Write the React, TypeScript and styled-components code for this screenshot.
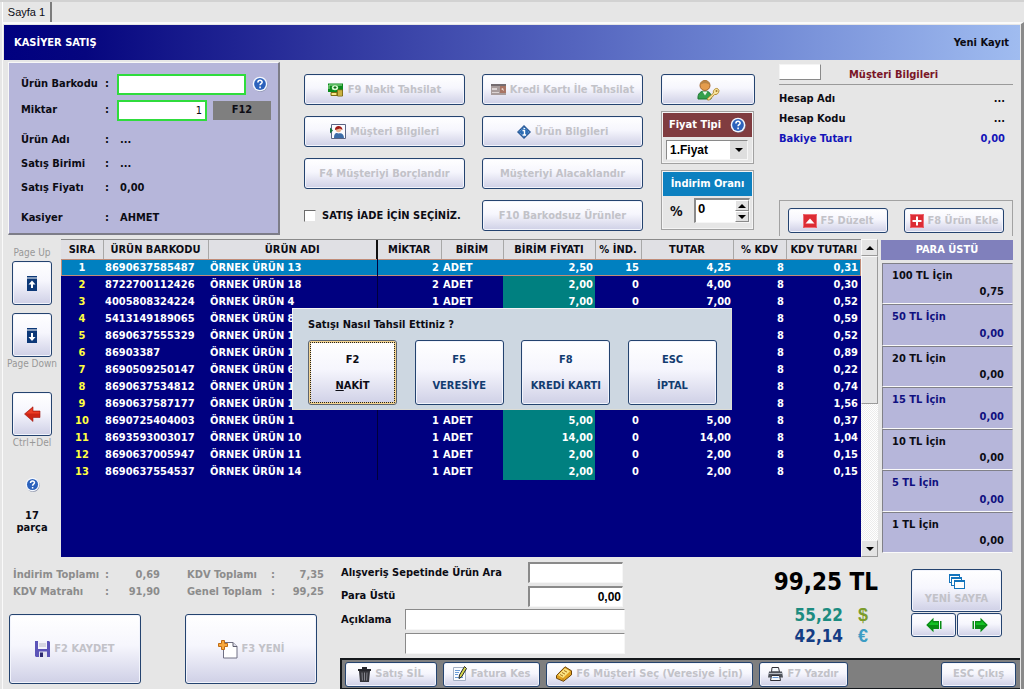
import React from "react";
import styled, { createGlobalStyle, css } from "styled-components";

const ui = `"DejaVu Sans Condensed", "DejaVu Sans", Tahoma, sans-serif`;
const plain = `"Liberation Sans", Arial, sans-serif`;

const GlobalStyle = createGlobalStyle`
  *, *::before, *::after { box-sizing: border-box; }
  body {
    margin: 0;
    background: #e6e6e6;
    color: #0c0c14;
    font: bold 11px/16px ${ui};
  }
  button, input, select { font: inherit; color: inherit; margin: 0; }
  svg { display: block; flex: none; }
`;

/* ---------- shell ---------- */

const Page = styled.div`
  position: relative;
  border-top: 2px solid #d2d2d2;
`;

const TabStrip = styled.nav`
  display: flex;
  height: 20px;
  padding-left: 2px;
`;

const Tab = styled.button`
  width: 50px;
  padding: 0;
  border: 0;
  border-left: 1px solid #ffffff;
  border-right: 2px solid #7c7c7c;
  background: #e6e6e6;
  font: 11px/16px ${plain};
`;

const Frame = styled.main`
  margin-left: 2px;
  border-style: solid;
  border-width: 2px 3px 0 1px;
  border-color: #fafafa #8a8a8a #e6e6e6 #fafafa;
  padding: 1px 1px 0 1px;
`;

const TitleBar = styled.header`
  display: flex;
  align-items: center;
  justify-content: space-between;
  height: 35px;
  padding: 0 11px 0 10px;
  background: linear-gradient(90deg, #000080, #06067f 8%, #2c329c 30%, #5464be 56%, #7088d4 74%, #a0bcf0);
`;

const Title = styled.h1`
  margin: 0;
  color: #ffffff;
  font: bold 11px/16px ${ui};
`;

/* ---------- shared controls ---------- */

const Button = styled.button<{ $live?: boolean; $h?: number }>`
  display: flex;
  align-items: center;
  justify-content: center;
  gap: 4px;
  height: ${(p) => p.$h ?? 31}px;
  padding: 0;
  border: 1px solid #24436f;
  border-radius: 3px;
  background: linear-gradient(#ffffff, #f6f6fd 45%, #cfd0e6);
  box-shadow: inset 0 0 0 1px #f2f4fc;
  color: ${(p) => (p.$live ? "#123c70" : "#c2c2c8")};
  white-space: nowrap;
`;

const sunken = css`
  border: 1px solid;
  border-color: #8a8a8a #f6f6f6 #f6f6f6 #8a8a8a;
  border-radius: 0;
  background: #ffffff;
  outline: none;
`;

/* ---------- top area ---------- */

const TopArea = styled.section`
  display: flex;
  height: 179px;
  padding: 2px 7px 0 4px;
`;

const EntryPanel = styled.div`
  display: grid;
  grid-template-columns: 84px 12px auto;
  grid-template-rows: 24px 28px 32px 16px 32px 28px;
  align-content: start;
  align-items: center;
  width: 272px;
  height: 173px;
  margin-right: 24px;
  padding: 9px 0 0 12px;
  border: 1px solid;
  border-color: #f8f8f8 #7d7d88 #7d7d88 #f8f8f8;
  border-right-width: 2px;
  border-bottom-width: 2px;
  background: #b6b6da;
`;

const EntryField = styled.div`
  display: flex;
  align-items: center;
  gap: 6px;
`;

const EntryValue = styled.span`
  padding-left: 3px;
`;

const GreenInput = styled.input<{ $w: number }>`
  width: ${(p) => p.$w}px;
  height: 21px;
  padding: 0 3px;
  border: 2px solid #2fdc3c;
  background: #ffffff;
  outline: none;
  text-align: right;
  font: 11px/16px ${ui};
`;

const KeyButton = styled.button`
  width: 58px;
  height: 19px;
  padding: 0;
  border: 0;
  background: #7f7f7f;
`;

const Actions = styled.div`
  display: grid;
  grid-template-columns: 161px 161px;
  grid-auto-rows: 31px;
  gap: 11px 17px;
  margin-right: 18px;
  padding-top: 12px;
`;

const ReturnCheck = styled.label`
  display: flex;
  align-items: center;
  gap: 6px;
  white-space: nowrap;

  input {
    ${sunken}
    appearance: none;
    width: 12px;
    height: 12px;
    border-color: #6c6c6c #e6e6e6 #e6e6e6 #6c6c6c;
  }
`;

const SideTools = styled.div`
  display: flex;
  flex-direction: column;
  gap: 6px;
  width: 94px;
  margin-right: 24px;
  padding-top: 12px;
`;

const Box = styled.div<{ $h: number }>`
  width: 93px;
  height: ${(p) => p.$h}px;
  border: 1px solid #a2a2a2;
  box-shadow: inset 0 0 0 1px #f4f4f4;
  padding: 1px;
`;

const BoxTitle = styled.div<{ $bg: string }>`
  display: flex;
  align-items: center;
  justify-content: center;
  gap: 9px;
  height: 24px;
  background: ${(p) => p.$bg};
  color: #ffffff;
`;

const SelectWrap = styled.div`
  display: grid;
  grid-template-columns: 1fr 17px;
  align-items: center;
  height: 20px;
  margin: 3px 4px 0 3px;
  ${sunken}

  select {
    grid-area: 1 / 1 / 2 / 3;
    width: 100%;
    height: 18px;
    padding: 0 3px;
    border: 0;
    background: none;
    appearance: none;
    color: #000000;
    font: bold 12px/16px ${plain};
  }
`;

const SelectArrow = styled.span`
  grid-area: 1 / 2 / 2 / 3;
  display: grid;
  place-items: center;
  height: 18px;
  background: #dedede;
  pointer-events: none;
`;

const RateRow = styled.div`
  display: flex;
  align-items: center;
  justify-content: space-between;
  margin: 2px 2px 0 7px;
`;

const PercentLabel = styled.label`
  font: bold 14px/16px ${ui};
`;

const Spinner = styled.div`
  display: flex;
  width: 56px;
  height: 25px;
  ${sunken}
  border-width: 2px 1px 1px 2px;

  input {
    flex: 1;
    width: 0;
    min-width: 0;
    padding: 0 0 4px 2px;
    border: 0;
    background: none;
    outline: none;
    color: #000000;
    font: bold 13px/16px ${plain};
  }
`;

const SpinButtons = styled.div`
  display: flex;
  flex-direction: column;
  width: 14px;

  button {
    display: grid;
    flex: 1;
    place-items: center;
    padding: 0;
    border: 1px solid;
    border-color: #ffffff #8a8a8a #8a8a8a #ffffff;
    background: #e2e2e2;
  }
`;

const Customer = styled.section`
  display: flex;
  flex: 1;
  flex-direction: column;
  min-width: 0;
`;

const CustomerHead = styled.div`
  display: flex;
  align-items: center;
  gap: 28px;
  height: 23px;
  border-bottom: 1px solid #9a9a9a;

  input {
    width: 42px;
    height: 16px;
    margin-bottom: 3px;
    border: 1px solid;
    border-color: #f4f4f4 #8a8a8a #8a8a8a #f4f4f4;
    background: #ffffff;
  }

  h2 {
    margin: 3px 0 0;
    color: #7a1526;
    font: bold 11px/16px ${ui};
  }
`;

const CustomerRow = styled.div<{ $blue?: boolean }>`
  display: flex;
  justify-content: space-between;
  padding-right: 8px;
  line-height: 20px;
  color: ${(p) => (p.$blue ? "#1414b8" : "inherit")};
`;

const CustomerRows = styled.div`
  padding-top: 4px;
`;

const CustomerActions = styled.div`
  display: grid;
  grid-template-columns: 100px 100px;
  justify-content: space-between;
  height: 36px;
  margin-top: auto;
  margin-bottom: 3px;
  padding: 7px 8px 0;
  border: 1px solid #a2a2a2;
  border-bottom: 0;
`;

/* ---------- middle area ---------- */

const MiddleArea = styled.section`
  display: flex;
  height: 318px;
  padding-right: 7px;
`;

const Rail = styled.aside`
  display: flex;
  flex-direction: column;
  align-items: center;
  width: 57px;
  padding: 7px 1px 0 0;
`;

const RailLabel = styled.span`
  color: #989898;
  font: 10px/14px ${ui};
  white-space: nowrap;
`;

const RailButton = styled(Button)`
  width: 40px;
  height: 44px;
`;

const RailGap = styled.div<{ $h: number }>`
  height: ${(p) => p.$h}px;
`;

const Pieces = styled.div`
  margin-top: 18px;
  text-align: center;
  line-height: 12px;
`;

const GridPane = styled.div`
  flex: 1;
  min-width: 0;
  border-top: 1px solid #8a8a8a;
  background: #000080;
`;

const Table = styled.table`
  width: 100%;
  border-collapse: collapse;
  table-layout: fixed;
  color: #ffffff;
`;

const HeadCell = styled.th<{ $mark?: boolean }>`
  height: 19px;
  padding: 0;
  border-right: ${(p) => (p.$mark ? "2px solid #101010" : "1px solid #a8a8a8")};
  background: #e0e0e4;
  color: #0c0c14;
  line-height: 19px;
  white-space: nowrap;

  &:last-child { border-right: 0; }
`;

const BodyRow = styled.tr<{ $on: boolean }>`
  height: 17px;
  background: ${(p) => (p.$on ? "#0080c0" : "#000080")};
  ${(p) => p.$on && css`box-shadow: inset 0 0 0 1px #c08c78;`}
`;

const Cell = styled.td<{ $a?: "left" | "right" | "center"; $bg?: string; $fg?: string; $mark?: boolean; $end?: number }>`
  padding: 0 ${(p) => p.$end ?? 2}px 0 2px;
  border-right: ${(p) => (p.$mark ? "1px solid #00003c" : "0")};
  background: ${(p) => p.$bg ?? "transparent"};
  color: ${(p) => p.$fg ?? "inherit"};
  text-align: ${(p) => p.$a ?? "right"};
  line-height: 17px;
  white-space: nowrap;
`;

const ScrollBar = styled.div`
  display: flex;
  flex-direction: column;
  width: 17px;
  margin-right: 3px;
  background: repeating-conic-gradient(#ffffff 0% 25%, #ececec 0% 50%) 0 0 / 2px 2px;
`;

const ScrollButton = styled.button`
  display: grid;
  place-items: center;
  height: 17px;
  padding: 0;
  border: 1px solid;
  border-color: #f8f8f8 #9a9a9a #9a9a9a #f8f8f8;
  background: #e4e4e4;
`;

const ScrollThumb = styled.div`
  height: 148px;
  margin-bottom: auto;
  border: 1px solid;
  border-color: #f8f8f8 #9a9a9a #9a9a9a #f8f8f8;
  background: #e4e4e4;
`;

const ChangePane = styled.aside`
  display: flex;
  flex-direction: column;
  width: 132px;
`;

const ChangeTitle = styled.h2`
  margin: 1px 0 3px;
  background: #8080bc;
  color: #ffffff;
  font: bold 11px/20px ${ui};
  text-align: center;
`;

const ChangeCell = styled.div<{ $blue: boolean }>`
  display: flex;
  flex: 1;
  flex-direction: column;
  justify-content: space-between;
  margin-left: 1px;
  padding: 4px 8px 4px 9px;
  border: 1px solid;
  border-color: #808088 #c8c8d4 #fafafa #808088;
  background: #b6b6da;
  color: ${(p) => (p.$blue ? "#101080" : "inherit")};

  span { line-height: 15px; }
  span:last-child { text-align: right; }
`;

const ChangeList = styled.div`
  display: flex;
  flex: 1;
  flex-direction: column;
  margin-bottom: 4px;
`;

/* ---------- bottom area ---------- */

const BottomArea = styled.section`
  display: flex;
  height: 132px;
`;

const Summary = styled.div`
  width: 336px;
  padding: 9px 0 0 5px;
`;

const Totals = styled.dl`
  display: grid;
  grid-template-columns: 92px 12px 43px 27px 84px 12px 41px;
  margin: 0 0 14px 4px;
  color: #8c8c8c;
  line-height: 17px;

  dt { white-space: nowrap; }
  dd { margin: 0; text-align: right; }
`;

const BigButtons = styled.div`
  display: grid;
  grid-template-columns: 132px 132px;
  gap: 44px;
`;

const BottomRight = styled.div`
  display: flex;
  flex: 1;
  flex-direction: column;
  min-width: 0;
`;

const BottomRow = styled.div`
  display: flex;
  flex: 1;
`;

const Notes = styled.div`
  display: grid;
  grid-template-columns: 64px 123px 97px;
  grid-template-rows: 21px 20px 21px 21px;
  align-content: start;
  align-items: center;
  gap: 3px 0;
  width: 285px;
  padding: 5px 0 0 1px;
`;

const WideLabel = styled.label`
  grid-column: 1 / 3;
`;

const NoteInput = styled.input<{ $wide?: boolean }>`
  ${sunken}
  grid-column: ${(p) => (p.$wide ? "2 / 4" : "3 / 4")};
  width: ${(p) => (p.$wide ? "100%" : "95px")};
  height: 21px;
  padding: 0 1px;
  border-width: ${(p) => (p.$wide ? "1px" : "2px 1px 1px 2px")};
  color: #000000;
  text-align: ${(p) => (p.$wide ? "left" : "right")};
  font: bold 12px/16px ${plain};
`;

const Amounts = styled.div`
  display: grid;
  flex: 1;
  grid-template-columns: 1fr 35px;
  align-content: start;
  align-items: center;
  padding: 9px 0 0;
  text-align: right;
`;

const Grand = styled.output`
  grid-column: 1 / 3;
  color: #000000;
  font: bold 24px/32px ${ui};
  margin-bottom: 7px;
`;

const Foreign = styled.output<{ $fg: string }>`
  color: ${(p) => p.$fg};
  font: bold 17px/21px ${ui};
`;

const CurrencyMark = styled.span<{ $fg: string }>`
  color: ${(p) => p.$fg};
  font: bold 18px/21px ${plain};
  padding-right: 10px;
`;

const Pager = styled.div`
  display: grid;
  grid-template-columns: 45px 45px;
  align-content: start;
  gap: 1px;
  margin: 12px 18px 0 33px;
`;

const NewPage = styled(Button)`
  grid-column: 1 / 3;
  flex-direction: column;
  gap: 2px;
  height: 43px;
`;

const Toolbar = styled.footer`
  display: flex;
  align-items: center;
  gap: 6px;
  height: 31px;
  padding: 0 4px 0 3px;
  border: 2px solid #14181c;
  border-right: 0;
  border-bottom-width: 1px;
  background: #7f7f7f;
`;

const ToolButton = styled(Button)<{ $w: number; $last?: boolean }>`
  width: ${(p) => p.$w}px;
  height: 25px;
  margin-left: ${(p) => (p.$last ? "auto" : "0")};
`;

/* ---------- payment dialog ---------- */

const PayDialog = styled.div`
  position: absolute;
  top: 306px;
  left: 50%;
  width: 440px;
  padding: 8px 14px 4px 15px;
  transform: translateX(-50%);
  border: 1px solid;
  border-color: #f4f4f4 #dcdcd4 #dcdcd4 #f4f4f4;
  background: #cdd7e1;

  h2 {
    margin: 0 0 7px;
    font: bold 11px/16px ${ui};
  }
`;

const PayChoices = styled.div`
  display: grid;
  grid-template-columns: repeat(4, 89px);
  justify-content: space-between;
`;

const PayButton = styled(Button)<{ $focus?: boolean }>`
  flex-direction: column;
  gap: 10px;
  height: 65px;
  ${(p) =>
    p.$focus &&
    css`
      border-color: #5c6470;
      box-shadow: inset 0 0 0 2px #f4d490;
      outline: 1px dotted #202020;
      outline-offset: -3px;
      color: #0c0c14;
    `}
`;

/* ---------- icons ---------- */

const Triangle = ({ up }: { up?: boolean }) => (
  <svg width="8" height="4" viewBox="0 0 8 4">
    <path d={up ? "M0 4 L4 0 L8 4Z" : "M0 0 L4 4 L8 0Z"} fill="#000" />
  </svg>
);

const HelpIcon = ({ size = 16 }: { size?: number }) => (
  <svg width={size} height={size} viewBox="0 0 16 16">
    <circle cx="8.6" cy="8.8" r="7" fill="#8890a8" />
    <circle cx="8" cy="8" r="7.3" fill="#f4f8ff" />
    <circle cx="8" cy="8" r="5.9" fill="#2c62bc" />
    <path d="M5.9 6.5c0-3 4.4-2.8 4.2-.3-.1 1.4-2 1.5-2 3M8.1 10.6v1.6" fill="none" stroke="#fff" strokeWidth="1.6" />
  </svg>
);

const MoneyIcon = () => (
  <svg width="16" height="14" viewBox="0 0 16 14">
    <path d="M0 .5h15v8.500H0z" fill="#0a8a1c" />
    <path d="M1 6V2h13" fill="none" stroke="#a4e8a0" />
    <ellipse cx="7" cy="4.800" rx="3.200" ry="2.500" fill="#d8f8d0" />
    <path d="M5.500 4.500h3M7 3v3" stroke="#0a6a18" />
    <path d="M9.500 7h5v6h-5z" fill="#f0d860" stroke="#7c6c14" />
    <path d="M9.500 9h5M9.500 11h5" stroke="#a48c20" />
    <path d="M3 9.500h6v3H3z" fill="#f0d860" stroke="#7c6c14" />
    <path d="M4 11h4" stroke="#fff8b0" />
  </svg>
);

const CardIcon = () => (
  <svg width="15" height="11" viewBox="0 0 15 11">
    <path d="M0 0h15v11H0z" fill="#a89c9c" />
    <path d="M0 0h15v2H0z" fill="#746c70" />
    <path d="M1 4h5v2H1zM1 8h7v1H1z" fill="#dcd4d4" />
    <path d="M9 2h6v7H9z" fill="#a87464" />
    <path d="M10 5l2-1 1 3z" fill="#f0dcd4" />
  </svg>
);

const PersonCardIcon = () => (
  <svg width="16" height="15" viewBox="0 0 16 15">
    <path d="M1.500.5h14v14h-14z" fill="#fafbff" stroke="#5a6484" />
    <path d="M0 3.500l3 3-3 3z" fill="#12743c" />
    <circle cx="8.500" cy="5.500" r="2.800" fill="#f0b894" />
    <path d="M5 6C4.500.5 12.500.5 12.500 6L10 4.500z" fill="#a01c18" />
    <path d="M4 14c0-5.500 3-5.500 4.500-4.500C11 8.500 14 9.500 14 14z" fill="#3c6ca8" />
  </svg>
);

const InfoIcon = () => (
  <svg width="14" height="14" viewBox="0 0 14 14">
    <path d="M7 0l7 7-7 7-7-7z" fill="#205090" />
    <path d="M7 1.700L12.300 7 7 12.300 1.700 7z" fill="#2c6cb4" stroke="#a8d0f0" strokeWidth=".7" strokeDasharray="1 1" />
    <path d="M5.500 5.500h2v4.500M5.500 10h3.500" fill="none" stroke="#fff" strokeWidth="1.400" />
    <path d="M6.500 3.500h1.500" stroke="#fff" strokeWidth="1.200" />
  </svg>
);

const UserKeyIcon = () => (
  <svg width="23" height="22" viewBox="0 0 23 22">
    <path d="M1 20c-.5-6 3-8 7-8s7 3 6 8z" fill="#34a04c" stroke="#1c7430" />
    <path d="M5.500 12.500l2.500 4 2.500-4z" fill="#e8f4e8" />
    <circle cx="8" cy="6.500" r="5" fill="#e49c4c" stroke="#a4642c" />
    <path d="M3 6C3 0 13 0 13 6c-3-2.500-7-2.500-10 0z" fill="#b88444" />
    <path d="M10.500 19.500l6-5.500c-.8-2.500 1.500-5 4-4.500l1.500 2c0 3-2.500 4.500-4.500 4l-5 5.500h-2z" fill="#f8e49c" stroke="#b48c34" />
    <circle cx="19.500" cy="12" r="1" fill="#a47c28" />
  </svg>
);

const RedIcon = ({ plus }: { plus?: boolean }) => (
  <svg width="14" height="14" viewBox="0 0 14 14">
    <rect width="14" height="14" rx="1" fill="#dc2c34" />
    <rect x=".5" y=".5" width="13" height="13" rx="1" fill="none" stroke="#f07078" />
    {plus ? <path d="M7 2.500v9M2.500 7h9" stroke="#fff" strokeWidth="2" /> : <path d="M2.500 9.500L7 4.500l4.500 5z" fill="#fff" />}
  </svg>
);

const PageIcon = ({ up }: { up?: boolean }) => (
  <svg width="10" height="15" viewBox="0 0 10 15">
    <path d="M0 0h10v15H0z" fill="#0c3878" />
    <path d="M0 2h10" stroke="#fff" />
    <path d={up ? "M5 4.500l3.500 4H6V12H4V8.500H1.500z" : "M5 13L1.500 9H4V5h2v4h2.500z"} fill="#fff" />
  </svg>
);

const RedArrow = () => (
  <svg width="17" height="16" viewBox="0 0 17 16">
    <path d="M.5 8L9 .8V5h7v6.500H9v4z" fill="#cc2414" stroke="#a01810" strokeWidth=".6" />
    <path d="M2 7.600L8.500 2v3.700h7V7.600z" fill="#ec3c24" />
  </svg>
);

const SaveIcon = () => (
  <svg width="15" height="16" viewBox="0 0 15 16">
    <path d="M0 0h14l1 1v15H1l-1-1z" fill="#5c54b8" />
    <path d="M3 0h9v8H3z" fill="#f4f4fa" />
    <path d="M4 3h7M4 5h7" stroke="#b8b8c8" />
    <path d="M4 10.500h8V16H4z" fill="#e4e4f0" />
    <path d="M5 11.500h3V16H5z" fill="#2c2870" />
  </svg>
);

const NewIcon = () => (
  <svg width="20" height="19" viewBox="0 0 20 19">
    <path d="M5.500 2.500h9.500l4 4v11.500H5.500z" fill="#fff" stroke="#707084" />
    <path d="M15 2.500v4h4" fill="#dcdce8" stroke="#606070" />
    <path d="M3.500.5h3v3h3v3h-3v3h-3v-3h-3v-3h3z" fill="#f8a83c" stroke="#c06c14" />
  </svg>
);

const TrashIcon = () => (
  <svg width="13" height="15" viewBox="0 0 13 15">
    <path d="M1 4h11l-1 11H2z" fill="#34343a" />
    <path d="M0 2h13v2H0zM4 0h5v2H4z" fill="#26262c" />
    <path d="M4 5.500l.4 8M6.500 5.500v8M9 5.500l-.4 8" stroke="#84848c" />
  </svg>
);

const InvoiceIcon = () => (
  <svg width="14" height="16" viewBox="0 0 14 16">
    <path d="M.5 1.500h12v13H.5z" fill="#fafcff" stroke="#a4b0c4" />
    <path d="M2 4.500h5M2 6.500h4M2 8.500h3M2 11.500h8" stroke="#6c9cd8" />
    <path d="M11.500.5l2 2L8.500 11 6 12.500 6.500 9z" fill="#d8d84c" stroke="#20242c" />
  </svg>
);

const CustomerPickIcon = () => (
  <svg width="16" height="16" viewBox="0 0 16 16">
    <path d="M.5 9.500L9 .8l6.500 4v4L7.500 15.300l-7-3z" fill="#e0a020" stroke="#6c4408" />
    <path d="M2 9l7-6.800 5 3L7 12z" fill="#fce484" />
    <path d="M4 8.500l3 1.600M6 6.500l3 1.600M8 4.500l3 1.600M7 12.500v2.500" stroke="#a8741c" />
  </svg>
);

const PrinterIcon = () => (
  <svg width="15" height="14" viewBox="0 0 15 14">
    <path d="M4 .5h6.500l1 4.500h-8z" fill="#f4f8fc" stroke="#303038" />
    <path d="M1 4.500h13l1 6H0z" fill="#50545c" />
    <path d="M1 6.500h13" stroke="#b4b8c0" />
    <path d="M3.500 8.500h8l1 5h-10z" fill="#f4f8fc" stroke="#303038" />
    <path d="M4.500 10.500h6" stroke="#6c9cd8" />
  </svg>
);

const PagesIcon = () => (
  <svg width="16" height="15" viewBox="0 0 16 15">
    <rect x=".5" y=".5" width="10" height="8" fill="#fff" stroke="#1474bc" />
    <rect x="2.500" y="3.500" width="10" height="8" fill="#fff" stroke="#1474bc" />
    <rect x="5.500" y="6.500" width="10" height="8" fill="#fff" stroke="#1474bc" />
    <path d="M.5 1.500h10M2.500 4.500h10M5.500 7.500h10" stroke="#1474bc" />
  </svg>
);

const GreenArrow = ({ right }: { right?: boolean }) => (
  <svg width="16" height="16" viewBox="0 0 16 16">
    <path
      d={right ? "M15.800 8L8.500.8V4H3v8h5.500v3.200zM.5 4h1.500v8H.5z" : "M.2 8L7.500.8V4H13v8H7.500v3.200zM14 4h1.500v8H14z"}
      fill="#088c14"
    />
    <path d={right ? "M13.800 8L9.500 3.500v2H4v2.500z" : "M2.200 8l4.300-4.500v2H12v2.500z"} fill="#14c024" />
  </svg>
);

/* ---------- data ---------- */

const columns: [string, number | undefined][] = [
  ["SIRA", 42], ["ÜRÜN BARKODU", 105], ["ÜRÜN ADI", undefined], ["MİKTAR", 64], ["BİRİM", 62],
  ["BİRİM FİYATI", 92], ["% İND.", 46], ["TUTAR", 92], ["% KDV", 53], ["KDV TUTARI", 75],
];

interface Line {
  code: string;
  product: number;
  vat: string;
  sale?: [qty: number, price: string, discount: number, total: string];
}

const lines: Line[] = [
  { code: "8690637585487", product: 13, vat: "0,31", sale: [2, "2,50", 15, "4,25"] },
  { code: "8722700112426", product: 18, vat: "0,30", sale: [2, "2,00", 0, "4,00"] },
  { code: "4005808324224", product: 4, vat: "0,52", sale: [1, "7,00", 0, "7,00"] },
  { code: "5413149189065", product: 8, vat: "0,59" },
  { code: "8690637555329", product: 19, vat: "0,52" },
  { code: "86903387", product: 15, vat: "0,89" },
  { code: "8690509250147", product: 6, vat: "0,22" },
  { code: "8690637534812", product: 16, vat: "0,74" },
  { code: "8690637587177", product: 12, vat: "1,56" },
  { code: "8690725404003", product: 1, vat: "0,37", sale: [1, "5,00", 0, "5,00"] },
  { code: "8693593003017", product: 10, vat: "1,04", sale: [1, "14,00", 0, "14,00"] },
  { code: "8690637005947", product: 11, vat: "0,15", sale: [1, "2,00", 0, "2,00"] },
  { code: "8690637554537", product: 14, vat: "0,15", sale: [1, "2,00", 0, "2,00"] },
];

const changes: [number, string][] = [
  [100, "0,75"], [50, "0,00"], [20, "0,00"], [15, "0,00"], [10, "0,00"], [5, "0,00"], [1, "0,00"],
];

const choices: [string, string][] = [["F2", "NAKİT"], ["F5", "VERESİYE"], ["F8", "KREDİ KARTI"], ["ESC", "İPTAL"]];

export default function App() {
  return (
    <Page lang="tr">
      <GlobalStyle />
      <TabStrip>
        <Tab type="button">Sayfa 1</Tab>
      </TabStrip>
      <Frame>
        <TitleBar>
          <Title>KASİYER SATIŞ</Title>
          <span>Yeni Kayıt</span>
        </TitleBar>

        <TopArea>
          <EntryPanel>
            <label htmlFor="barcode">Ürün Barkodu</label>
            <span>:</span>
            <EntryField>
              <GreenInput id="barcode" $w={129} />
              <HelpIcon />
            </EntryField>
            <label htmlFor="qty">Miktar</label>
            <span>:</span>
            <EntryField>
              <GreenInput id="qty" $w={90} defaultValue="1" />
              <KeyButton type="button">F12</KeyButton>
            </EntryField>
            <span>Ürün Adı</span><span>:</span><EntryValue>...</EntryValue>
            <span>Satış Birimi</span><span>:</span><EntryValue>...</EntryValue>
            <span>Satış Fiyatı</span><span>:</span><EntryValue>0,00</EntryValue>
            <span>Kasiyer</span><span>:</span><EntryValue>AHMET</EntryValue>
          </EntryPanel>

          <Actions>
            <Button type="button"><MoneyIcon />F9 Nakit Tahsilat</Button>
            <Button type="button"><CardIcon />Kredi Kartı İle Tahsilat</Button>
            <Button type="button"><PersonCardIcon />Müşteri Bilgileri</Button>
            <Button type="button"><InfoIcon />Ürün Bilgileri</Button>
            <Button type="button">F4 Müşteriyi Borçlandır</Button>
            <Button type="button">Müşteriyi Alacaklandır</Button>
            <ReturnCheck><input type="checkbox" />SATIŞ İADE İÇİN SEÇİNİZ.</ReturnCheck>
            <Button type="button">F10 Barkodsuz Ürünler</Button>
          </Actions>

          <SideTools>
            <Button type="button" aria-label="Kullanıcı"><UserKeyIcon /></Button>
            <Box $h={53}>
              <BoxTitle $bg="#803c40"><label htmlFor="price">Fiyat Tipi</label><HelpIcon /></BoxTitle>
              <SelectWrap>
                <select id="price"><option>1.Fiyat</option></select>
                <SelectArrow><Triangle /></SelectArrow>
              </SelectWrap>
            </Box>
            <Box $h={60}>
              <BoxTitle $bg="#0c80c0">İndirim Oranı</BoxTitle>
              <RateRow>
                <PercentLabel htmlFor="rate">%</PercentLabel>
                <Spinner>
                  <input id="rate" defaultValue="0" />
                  <SpinButtons>
                    <button type="button" aria-label="Artır"><Triangle up /></button>
                    <button type="button" aria-label="Azalt"><Triangle /></button>
                  </SpinButtons>
                </Spinner>
              </RateRow>
            </Box>
          </SideTools>

          <Customer>
            <CustomerHead>
              <input aria-label="Müşteri" />
              <h2>Müşteri Bilgileri</h2>
            </CustomerHead>
            <CustomerRows>
              <CustomerRow><span>Hesap Adı</span><span>...</span></CustomerRow>
              <CustomerRow><span>Hesap Kodu</span><span>...</span></CustomerRow>
              <CustomerRow $blue><span>Bakiye Tutarı</span><span>0,00</span></CustomerRow>
            </CustomerRows>
            <CustomerActions>
              <Button type="button" $h={25}><RedIcon />F5 Düzelt</Button>
              <Button type="button" $h={25}><RedIcon plus />F8 Ürün Ekle</Button>
            </CustomerActions>
          </Customer>
        </TopArea>

        <MiddleArea>
          <Rail>
            <RailLabel>Page Up</RailLabel>
            <RailGap $h={1} />
            <RailButton type="button" aria-label="Page Up"><PageIcon up /></RailButton>
            <RailGap $h={8} />
            <RailButton type="button" aria-label="Page Down"><PageIcon /></RailButton>
            <RailLabel>Page Down</RailLabel>
            <RailGap $h={21} />
            <RailButton type="button" aria-label="Sil"><RedArrow /></RailButton>
            <RailLabel>Ctrl+Del</RailLabel>
            <RailGap $h={27} />
            <HelpIcon size={15} />
            <Pieces>17<br />parça</Pieces>
          </Rail>

          <GridPane>
            <Table>
              <colgroup>
                {columns.map(([name, w]) => <col key={name} width={w} />)}
              </colgroup>
              <thead>
                <tr>
                  {columns.map(([name]) => <HeadCell key={name} $mark={name === "ÜRÜN ADI"}>{name}</HeadCell>)}
                </tr>
              </thead>
              <tbody>
                {lines.map(({ code, product, vat, sale }, i) => (
                  <BodyRow key={code} $on={i === 0}>
                    <Cell $a="center" $fg={i === 0 ? "#ffffff" : "#ffff40"}>{i + 1}</Cell>
                    <Cell $a="left">{code}</Cell>
                    <Cell $a="left" $mark>{`ÖRNEK ÜRÜN ${product}`}</Cell>
                    <Cell>{sale?.[0]}</Cell>
                    <Cell $a="left">{sale && "ADET"}</Cell>
                    <Cell $bg={i === 0 ? undefined : "#008080"}>{sale?.[1]}</Cell>
                    <Cell>{sale?.[2]}</Cell>
                    <Cell>{sale?.[3]}</Cell>
                    <Cell>8</Cell>
                    <Cell $end={3}>{vat}</Cell>
                  </BodyRow>
                ))}
              </tbody>
            </Table>
          </GridPane>

          <ScrollBar>
            <ScrollButton type="button" aria-label="Yukarı"><Triangle up /></ScrollButton>
            <ScrollThumb />
            <ScrollButton type="button" aria-label="Aşağı"><Triangle /></ScrollButton>
          </ScrollBar>

          <ChangePane>
            <ChangeTitle>PARA ÜSTÜ</ChangeTitle>
            <ChangeList>
              {changes.map(([note, rest], i) => (
                <ChangeCell key={note} $blue={i % 2 === 1}>
                  <span>{note} TL İçin</span>
                  <span>{rest}</span>
                </ChangeCell>
              ))}
            </ChangeList>
          </ChangePane>
        </MiddleArea>

        <BottomArea>
          <Summary>
            <Totals>
              <dt>İndirim Toplamı</dt><span>:</span><dd>0,69</dd><span />
              <dt>KDV Toplamı</dt><span>:</span><dd>7,35</dd>
              <dt>KDV Matrahı</dt><span>:</span><dd>91,90</dd><span />
              <dt>Genel Toplam</dt><span>:</span><dd>99,25</dd>
            </Totals>
            <BigButtons>
              <Button type="button" $h={70}><SaveIcon />F2 KAYDET</Button>
              <Button type="button" $h={70}><NewIcon />F3 YENİ</Button>
            </BigButtons>
          </Summary>

          <BottomRight>
            <BottomRow>
              <Notes>
                <WideLabel htmlFor="find">Alışveriş Sepetinde Ürün Ara</WideLabel>
                <NoteInput id="find" />
                <WideLabel htmlFor="change">Para Üstü</WideLabel>
                <NoteInput id="change" defaultValue="0,00" />
                <label htmlFor="note">Açıklama</label>
                <NoteInput id="note" $wide />
                <NoteInput aria-label="Açıklama 2" $wide />
              </Notes>
              <Amounts>
                <Grand>99,25 TL</Grand>
                <Foreign $fg="#1c8c80">55,22</Foreign><CurrencyMark $fg="#7c9c2c">$</CurrencyMark>
                <Foreign $fg="#143c84">42,14</Foreign><CurrencyMark $fg="#3c9cc4">€</CurrencyMark>
              </Amounts>
              <Pager>
                <NewPage type="button"><PagesIcon />YENİ SAYFA</NewPage>
                <Button type="button" $h={24} aria-label="Önceki sayfa"><GreenArrow /></Button>
                <Button type="button" $h={24} aria-label="Sonraki sayfa"><GreenArrow right /></Button>
              </Pager>
            </BottomRow>
            <Toolbar>
              <ToolButton type="button" $w={92}><TrashIcon />Satış SİL</ToolButton>
              <ToolButton type="button" $w={97}><InvoiceIcon />Fatura Kes</ToolButton>
              <ToolButton type="button" $w={207}><CustomerPickIcon />F6 Müşteri Seç (Veresiye İçin)</ToolButton>
              <ToolButton type="button" $w={89}><PrinterIcon />F7 Yazdır</ToolButton>
              <ToolButton type="button" $w={75} $last>ESC Çıkış</ToolButton>
            </Toolbar>
          </BottomRight>
        </BottomArea>
      </Frame>

      <PayDialog role="dialog" aria-labelledby="pay-title">
        <h2 id="pay-title">Satışı Nasıl Tahsil Ettiniz ?</h2>
        <PayChoices>
          {choices.map(([key, name], i) => (
            <PayButton key={key} type="button" $live $focus={i === 0}>
              <span>{key}</span>
              <span>{i === 0 ? <><u>{name[0]}</u>{name.slice(1)}</> : name}</span>
            </PayButton>
          ))}
        </PayChoices>
      </PayDialog>
    </Page>
  );
}
